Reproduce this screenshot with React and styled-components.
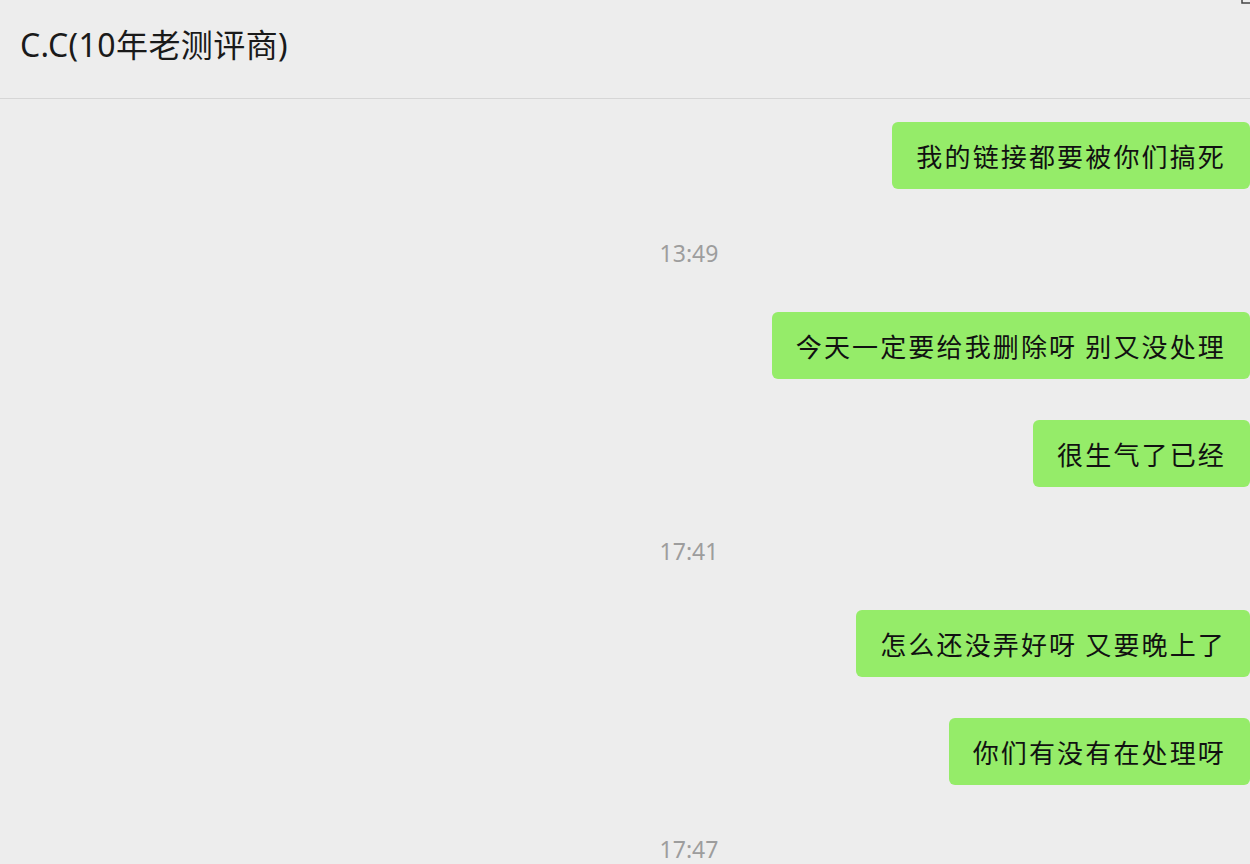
import React from 'react'
import styled, { createGlobalStyle } from 'styled-components';

const GlobalStyle = createGlobalStyle`
    html, body {
        margin:0;
        padding:0;
        background:#ededed;
        overflow:hidden;
    }
    body{
        font-family:"Noto Sans","Noto Sans CJK SC",sans-serif;
    }
`;

const Window = styled.div`
    position:relative;
    width:1250px;
    height:864px;
    background:#ededed;
    overflow:hidden;
`;

const Header = styled.div`
    height:98px;
    border-bottom:1px solid #d6d6d6;
    display:flex;
    align-items:center;
    padding:0 20px;
    box-sizing:content-box;
`;

const Title = styled.div`
    font-size:32px;
    color:#1a1a1a;
    margin-top:-12px;
    letter-spacing:0.4px;
`;

const CornerMark = styled.svg`
    position:absolute;
    top:0;
    right:0;
`;

const MessageList = styled.div`
    display:flex;
    flex-direction:column;
    gap:41px;
    padding-top:23px;
`;

const Row = styled.div`
    display:flex;
    justify-content:flex-end;
`;

const Bubble = styled.div`
    background:#95ec69;
    border-radius:6px;
    padding:14px 24px;
    font-family:"Noto Sans CJK SC","Noto Sans",sans-serif;
    font-size:26px;
    line-height:39px;
    color:#111;
    letter-spacing:2.15px;
    white-space:nowrap;
`;

const Time = styled.div`
    display:flex;
    justify-content:center;
    padding-left:128px;
    margin:8px 0 3px;
    font-size:23px;
    line-height:30px;
    color:#9d9d9d;
`;

const messages = [
    { type: 'msg', text: '我的链接都要被你们搞死' },
    { type: 'time', text: '13:49' },
    { type: 'msg', text: '今天一定要给我删除呀 别又没处理' },
    { type: 'msg', text: '很生气了已经' },
    { type: 'time', text: '17:41' },
    { type: 'msg', text: '怎么还没弄好呀 又要晚上了' },
    { type: 'msg', text: '你们有没有在处理呀' },
    { type: 'time', text: '17:47' },
];

export default function App() {
    return (
        <Window>
            <GlobalStyle />
            <CornerMark width="10" height="5" viewBox="0 0 10 5">
                <path d="M2 0 V3 H10" fill="none" stroke="#444" strokeWidth="1.5" />
            </CornerMark>
            <Header>
                <Title>C.C(10年老测评商)</Title>
            </Header>
            <MessageList>
                {messages.map((m, i) =>
                    m.type === 'time'
                        ? <Time key={i}>{m.text}</Time>
                        : <Row key={i}><Bubble>{m.text}</Bubble></Row>
                )}
            </MessageList>
        </Window>
    )
}
